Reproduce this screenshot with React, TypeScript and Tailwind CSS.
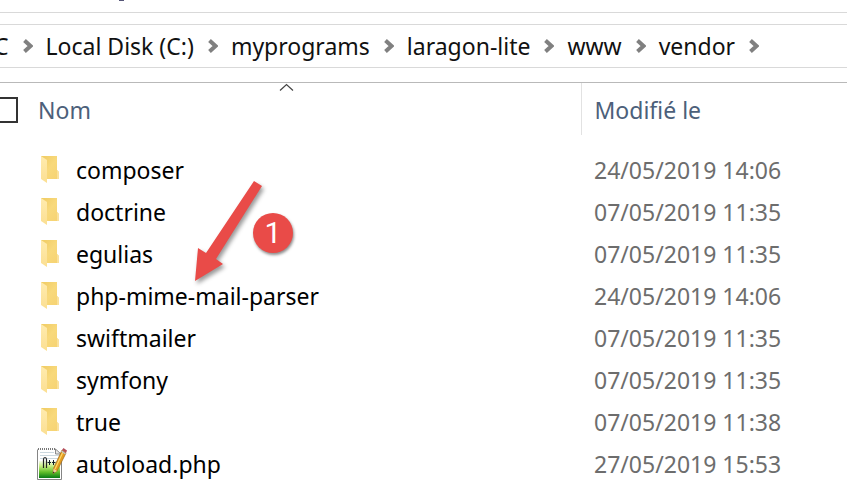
import React from "react";

type Entry = { name: string; date: string; kind: "folder" | "file" };

const crumbs = ["C", "Local Disk (C:)", "myprograms", "laragon-lite", "www", "vendor"];

const entries: Entry[] = [
  { name: "composer", date: "24/05/2019 14:06", kind: "folder" },
  { name: "doctrine", date: "07/05/2019 11:35", kind: "folder" },
  { name: "egulias", date: "07/05/2019 11:35", kind: "folder" },
  { name: "php-mime-mail-parser", date: "24/05/2019 14:06", kind: "folder" },
  { name: "swiftmailer", date: "07/05/2019 11:35", kind: "folder" },
  { name: "symfony", date: "07/05/2019 11:35", kind: "folder" },
  { name: "true", date: "07/05/2019 11:38", kind: "folder" },
  { name: "autoload.php", date: "27/05/2019 15:53", kind: "file" },
];

function Chevron() {
  return (
    <svg className="h-4 w-[10px] shrink-0" viewBox="0 0 10 16" fill="none" aria-hidden="true">
      <path d="M1.5 2.5 L7.5 8 L1.5 13.5" stroke="#808080" strokeWidth="4" />
    </svg>
  );
}

function FolderIcon() {
  return (
    <svg className="h-8 w-8 shrink-0" viewBox="0 -1 32 32" aria-hidden="true">
      <defs>
        <linearGradient id="folder-back" x1="0" y1="0" x2="1" y2="1">
          <stop offset="0" stopColor="#f0cb62" />
          <stop offset="0.5" stopColor="#f8d97c" />
          <stop offset="1" stopColor="#f6d271" />
        </linearGradient>
        <linearGradient id="folder-flap" x1="0" y1="0" x2="0" y2="1">
          <stop offset="0" stopColor="#ffebae" />
          <stop offset="1" stopColor="#fbdf92" />
        </linearGradient>
      </defs>
      <path d="M4 1H20V15L22 17V24H9L4 22Z" fill="url(#folder-back)" />
      <path d="M4 1L10 5V28L4 24Z" fill="url(#folder-flap)" />
      <path d="M20 15V24H22V17Z" fill="#fae19c" />
    </svg>
  );
}

function NotepadIcon() {
  return (
    <svg className="h-8 w-8 shrink-0 overflow-visible" viewBox="0 0 32 32" aria-hidden="true">
      <defs>
        <linearGradient id="page-green" x1="0" y1="0" x2="0" y2="1">
          <stop offset="0" stopColor="#f4fae9" />
          <stop offset="0.3" stopColor="#c8ed83" />
          <stop offset="0.65" stopColor="#62bf2b" />
          <stop offset="1" stopColor="#087a17" />
        </linearGradient>
      </defs>
      <path d="M1 1H19L24 6V31H1Z" fill="#fff" />
      <path d="M3 4.5H17M3 7.5H22M3 10.5H22" stroke="#cbd8df" />
      <path d="M2 13H23V30H2Z" fill="url(#page-green)" />
      <path d="M.5 1.5V31.5H24.5V6" fill="none" stroke="#858585" />
      <path d="M1 1H19" stroke="#777" strokeWidth="2" strokeDasharray="1 1" />
      <path d="M18.5 1V6H24Z" fill="#e6e6e6" stroke="#8b8b8b" />
      <path d="M6.5 20V11.5Q6.5 9.5 8 9.5Q9.5 9.5 9.5 11.5V20" fill="none" stroke="#252525" strokeWidth="1.2" />
      <path d="M10.5 14.5H14M12.5 12V17M15 14.5H18.5M16.5 12V17" stroke="#17202a" strokeWidth="1" />
      <path d="M25 2L29 5L20 23L16 25.5L16.5 20.5Z" fill="#e49d20" stroke="#9c651a" strokeWidth=".7" />
      <path d="M26 4L18 21" stroke="#ffd868" strokeWidth="1.2" />
      <path d="M16.5 20.5L20 23L16 25.5Z" fill="#edcf9e" />
      <path d="M16 25.5L16.2 23.5L17.7 24.5Z" fill="#222" />
      <path d="M25 2L26.5 0L30 2.5L29 5Z" fill="#b44e5a" />
      <path d="M24.5 3L28.5 6" stroke="#b9c4cf" strokeWidth="1.3" />
    </svg>
  );
}

export default function App() {
  return (
    <main className="relative min-h-screen overflow-hidden bg-white font-['Noto_Sans','Segoe_UI',sans-serif] text-[23px] leading-8 text-black">
      <div className="h-[13px] border-b border-[#d9d9d9] pl-[119px]">
        <div className="h-px w-[5px] bg-[#555577]" />
      </div>
      <nav aria-label="Path" className="mt-[11px] h-11 border-y border-[#d9d9d9]">
        <ol className="-ml-[6px] flex h-full items-center gap-[13px] whitespace-nowrap">
          {crumbs.map((crumb) => (
            <li key={crumb} className="flex items-center gap-[14px]">
              <a href="#" className="text-[#111]">{crumb}</a>
              <Chevron />
            </li>
          ))}
        </ol>
      </nav>
      <section className="relative mt-[14px] border-t border-[#b9b9b9]">
        <table className="w-full table-fixed border-collapse text-left">
          <colgroup>
            <col className="w-[581px]" />
            <col />
          </colgroup>
          <thead>
            <tr className="h-[52px] text-[#4c607a]">
              <th scope="col" className="border-r border-[#e2e2e2] p-0 pt-0.5 font-normal">
                <div className="flex items-center gap-5">
                  <input
                    type="checkbox"
                    aria-label="Select all"
                    className="-ml-2 size-[26px] shrink-0 appearance-none border-2 border-[#333] bg-white"
                  />
                  <span>Nom</span>
                </div>
              </th>
              <th scope="col" className="p-0 pt-0.5 pl-[13px] font-normal">Modifié le</th>
            </tr>
          </thead>
          <tbody className="before:block before:h-[14px] before:content-['']">
            {entries.map((entry) => (
              <tr key={entry.name} className="h-[42px]">
                <td className="p-0 pl-[37px]">
                  <div className="flex items-center gap-[7px]">
                    {entry.kind === "folder" ? <FolderIcon /> : <NotepadIcon />}
                    <span>{entry.name}</span>
                  </div>
                </td>
                <td className="p-0 pl-[13px] text-[#6d6d6d]">{entry.date}</td>
              </tr>
            ))}
          </tbody>
        </table>
        <svg className="absolute top-0 left-[279px] h-2 w-[15px]" viewBox="0 0 15 8" fill="none" aria-hidden="true">
          <path d="M1 7.5L7.5 1.5L14 7.5" stroke="#444" strokeWidth="1.2" />
        </svg>
        <svg
          className="absolute top-[93px] left-[185px] h-[115px] w-[90px] drop-shadow-[2px_3px_2px_rgba(0,0,0,0.4)]"
          viewBox="0 0 90 115"
          aria-hidden="true"
        >
          <path d="M69 5L77 10L31 83L38 88L10 105L13 72L21 77Z" fill="#e94b48" />
        </svg>
        <span className="absolute top-[130px] left-[253px] flex size-10 items-center justify-center rounded-full bg-[#e94b48] font-['Roboto',sans-serif] text-[30px] text-white shadow-[1px_2px_3px_rgba(0,0,0,0.45)]">
          1
        </span>
      </section>
    </main>
  );
}
